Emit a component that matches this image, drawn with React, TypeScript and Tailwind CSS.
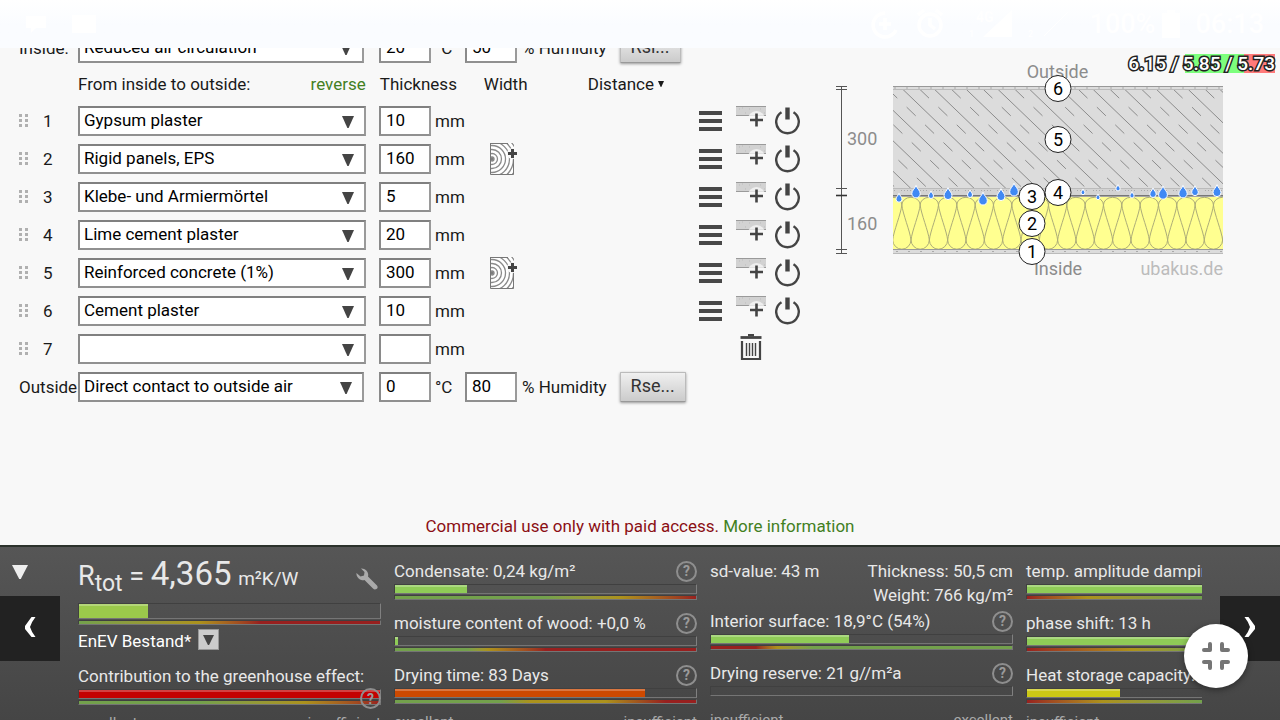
import React from "react";

const materials = [
  "",
  "Gypsum plaster",
  "Rigid panels, EPS",
  "Klebe- und Armiermörtel",
  "Lime cement plaster",
  "Reinforced concrete (1%)",
  "Cement plaster",
];

const layers = [
  { name: "Gypsum plaster", thickness: "10", frame: false },
  { name: "Rigid panels, EPS", thickness: "160", frame: true },
  { name: "Klebe- und Armiermörtel", thickness: "5", frame: false },
  { name: "Lime cement plaster", thickness: "20", frame: false },
  { name: "Reinforced concrete (1%)", thickness: "300", frame: true },
  { name: "Cement plaster", thickness: "10", frame: false },
  { name: "", thickness: "", frame: false },
];

const fieldClass =
  "h-[30px] border-2 border-t-[#808080] border-l-[#8a8a8a] border-r-[#9a9a9a] border-b-[#909090] bg-white text-[17px] leading-5 text-black outline-none";

function Caret({ className }: { className: string }) {
  return (
    <svg viewBox="0 0 12 12" preserveAspectRatio="none" className={className} aria-hidden="true">
      <path d="M0 0H12L6.6 12H5.4z" fill="currentColor" />
    </svg>
  );
}

function Picker({ label, value, options, className }: { label: string; value: string; options: string[]; className: string }) {
  return (
    <div className={`relative ${className}`}>
      <select aria-label={label} defaultValue={value} className={`${fieldClass} block w-full appearance-none pb-0.5 pl-1`}>
        {options.map((o) => (
          <option key={o}>{o}</option>
        ))}
      </select>
      <Caret className="pointer-events-none absolute top-2.5 right-3 h-3 w-3 text-[#444]" />
    </div>
  );
}

function NumberField({ label, value }: { label: string; value: string }) {
  return <input aria-label={label} defaultValue={value} className={`${fieldClass} w-[52px] pb-0.5 pl-[5px]`} />;
}

function DragIcon() {
  return (
    <svg viewBox="0 0 9 14" className="h-3.5 w-[9px]" fill="#b0b0b0" aria-hidden="true">
      {[0, 5, 10].map((y) => (
        <g key={y}>
          <rect x="0" y={y} width="3" height="3" />
          <rect x="6" y={y} width="3" height="3" />
        </g>
      ))}
    </svg>
  );
}

function WoodIcon() {
  return (
    <svg viewBox="0 0 28 32" className="h-8 w-7" aria-hidden="true">
      <defs>
        <clipPath id="wood">
          <rect x="0" y="0" width="24" height="32" />
        </clipPath>
      </defs>
      <g clipPath="url(#wood)" fill="none" stroke="#8a8a8a" strokeWidth="1.3">
        <rect x="0" y="0" width="24" height="32" fill="#fff" stroke="none" />
        {[2, 5.5, 9.5, 13.5, 17.5, 21.5, 25.5].map((r) => (
          <circle key={r} cx="2" cy="16" r={r} />
        ))}
        <circle cx="2" cy="16" r="1.6" fill="#777" />
      </g>
      <path d="M0.5 0V31.5H23.5V15M0 0.5H18" fill="none" stroke="#777" />
      <circle cx="22.5" cy="10.5" r="5.5" fill="#f8f8f8" />
      <path d="M18 10.5H27M22.5 6V15" stroke="#444" strokeWidth="3" />
    </svg>
  );
}

function MenuIcon() {
  return (
    <svg viewBox="0 0 24 20" className="h-5 w-6" fill="#484848" aria-hidden="true">
      <rect y="0" width="23" height="4" />
      <rect y="8" width="23" height="4" />
      <rect y="16" width="23" height="4" />
    </svg>
  );
}

function AddLayerIcon() {
  return (
    <svg viewBox="0 0 30 22" className="h-[22px] w-[30px]" aria-hidden="true">
      <rect width="30" height="10" fill="#d2d2d2" />
      <path d="M0 0.5H30M0 9.5H30" stroke="#9a9a9a" />
      <path d="M3 3h1M9 7h1M13 3h1M24 3h1M28 7h1M6 2h1" stroke="#bbb" />
      <circle cx="20.5" cy="14" r="9" fill="#f8f8f8" opacity="0.75" />
      <path d="M14 14H27M20.5 7.5V20.5" stroke="#444" strokeWidth="2.6" />
    </svg>
  );
}

function PowerIcon() {
  return (
    <svg viewBox="0 0 26 28" className="h-7 w-[26px]" fill="none" stroke="#444" aria-hidden="true">
      <path d="M6.5 5.3A11.3 11.3 0 1 0 18.5 5.3" strokeWidth="2.4" />
      <path d="M12.5 0.5V12.5" strokeWidth="4.4" />
    </svg>
  );
}

function TrashIcon() {
  return (
    <svg viewBox="0 0 22 27" className="h-[27px] w-[22px]" fill="none" stroke="#444" aria-hidden="true">
      <path d="M0.5 3.5H21.5" strokeWidth="2.8" />
      <path d="M8 1.2H14" strokeWidth="2.4" />
      <path d="M2 7V25H20V7" strokeWidth="2.2" />
      <path d="M6.5 9V22M9.5 9V22M12.5 9V22M15.5 9V22" strokeWidth="1.4" />
    </svg>
  );
}

function ResistanceButton({ children }: { children: string }) {
  return (
    <button className="ml-[13px] h-[30px] rounded-[1px] border border-[#bbb] border-b-[#999] bg-linear-to-b from-[#f0f0f0] to-[#cbcbcb] px-2.5 pb-0.5 text-lg leading-5 text-[#333] shadow-[0_1px_3px_rgba(0,0,0,0.4)]">
      {children}
    </button>
  );
}

function AirRow({ label, air, temp, humidity, button }: { label: string; air: string; temp: string; humidity: string; button: string }) {
  return (
    <div className="flex h-[30px] items-center">
      <span className="w-[59px] whitespace-nowrap">{label}</span>
      <Picker label={`${label} air layer`} value={air} options={[air]} className="mr-[15px] w-[286px]" />
      <NumberField label={`${label} temperature`} value={temp} />
      <span className="ml-1 w-[30px]">°C</span>
      <NumberField label={`${label} humidity`} value={humidity} />
      <span className="ml-[5px]">% Humidity</span>
      <ResistanceButton>{button}</ResistanceButton>
    </div>
  );
}

function LayerRow({ index, name, thickness, frame }: { index: number; name: string; thickness: string; frame: boolean }) {
  return (
    <div className="grid h-[30px] grid-cols-[24px_35px_301px_56px_55px_209px_37px_39px_26px] grid-rows-[30px] items-center">
      <DragIcon />
      <span>{index}</span>
      <Picker label={`Layer ${index} material`} value={name} options={materials} className="w-[288px]" />
      <NumberField label={`Layer ${index} thickness`} value={thickness} />
      <span>mm</span>
      <div>
        {frame && (
          <button aria-label="Add frame" className="block">
            <WoodIcon />
          </button>
        )}
      </div>
      {name ? (
        <>
          <button aria-label="Layer menu" className="justify-self-start">
            <MenuIcon />
          </button>
          <button aria-label="Insert layer" className="self-start justify-self-start">
            <AddLayerIcon />
          </button>
          <button aria-label="Toggle layer" className="justify-self-start">
            <PowerIcon />
          </button>
        </>
      ) : (
        <button aria-label="Delete layer" className="col-start-8 ml-1 self-start justify-self-start">
          <TrashIcon />
        </button>
      )}
    </div>
  );
}

const drops = [
  [899, 198, 3], [916, 192, 4.2], [931, 195, 2.5], [948, 194, 4], [970, 194, 2.5], [983, 199, 4.3], [1001, 195, 4],
  [1014, 190, 4.3], [1083, 192, 1.9], [1098, 197, 1.9], [1118, 188, 2.1], [1132, 195, 2.1], [1153, 193, 3.2],
  [1163, 193, 4.4], [1183, 192, 4.2], [1195, 191, 3.3], [1217, 191, 4],
];

const markers = [
  [6, 1058, 88], [5, 1058, 139], [4, 1058, 192], [3, 1032, 196], [2, 1032, 223], [1, 1032, 251],
];

function WallSection() {
  const hatch = [];
  for (let k = -4; k < 11; k++) {
    const x = 903 + k * 31.7;
    hatch.push(<path key={`s${k}`} d={`M${x} 89.5L${x + 103} 188.5`} />);
    hatch.push(<path key={`d${k}`} d={`M${x + 17} 89.5L${x + 120} 188.5`} strokeDasharray="12.5 13" />);
  }
  const waves = [];
  for (let k = -1; k < 19; k++) {
    const x = 911 + k * 18.33;
    waves.push(
      <path
        key={k}
        d={`M${x} 240C${x - 1} 231 ${x - 8.2} 214 ${x - 9.17} 205A9.17 7.7 0 0 1 ${x + 9.17} 205C${x + 8.2} 214 ${x + 1} 231 ${x} 240A9.17 9.5 0 0 0 ${x + 18.33} 240`}
      />
    );
  }
  const grains = [];
  for (let k = 0; k < 82; k++) {
    const x = 894 + k * 4;
    grains.push(<rect key={`a${k}`} x={x + ((k * 7) % 4)} y={190 + ((k * 5) % 5)} width="1" height="1" />);
    if (k % 3 === 0) {
      grains.push(<rect key={`b${k}`} x={x} y={87.5} width="2" height="1" />);
      grains.push(<rect key={`c${k}`} x={x + 2} y={251} width="2" height="1" />);
    }
  }
  return (
    <svg viewBox="830 60 400 224" className="h-[224px] w-[400px]" fontFamily="Roboto, sans-serif" fontSize="18" role="img" aria-label="Wall cross section">
      <defs>
        <clipPath id="wall">
          <rect x="893" y="86" width="330" height="168" />
        </clipPath>
        <clipPath id="concrete">
          <rect x="893" y="89" width="330" height="99.5" />
        </clipPath>
      </defs>
      <g stroke="#555" strokeWidth="1" fill="none">
        <path d="M841.5 86V254M836 86.5H847M836 89.5H847M836 188.5H847M836 249.5H847M836 253.5H847" />
        <path d="M836 195.5H847" stroke="#333" strokeWidth="1.6" />
      </g>
      <text x="847" y="145" fill="#8c8c8c">300</text>
      <text x="847" y="229.5" fill="#8c8c8c">160</text>
      <text x="1057.5" y="77.5" textAnchor="middle" fill="#8c8c8c">Outside</text>
      <g clipPath="url(#wall)">
        <rect x="893" y="86" width="330" height="168" fill="#dcdcdc" />
        <rect x="893" y="188.5" width="330" height="8" fill="#d3d3d3" />
        <rect x="893" y="197" width="330" height="52.5" fill="#ffff90" />
        <g clipPath="url(#concrete)" stroke="#8c8c8c" strokeWidth="1" fill="none">{hatch}</g>
        <g fill="#aaa">{grains}</g>
        <g stroke="#adad78" strokeWidth="1" fill="none">{waves}</g>
        <path d="M893 89.5H1223M893 188.5H1223M893 253.5H1223" stroke="#bbb" />
        <path d="M893 86.5H1223M893 249.5H1223" stroke="#999" />
        <path d="M893 195.8H1223" stroke="#777" strokeWidth="1.5" />
      </g>
      <g stroke="#fff" strokeWidth="1" fill="#4089f4">
        {drops.map(([x, y, r]) => (
          <path
            key={x}
            d={`M${x} ${y - r * 1.6}C${x + r * 0.3} ${y - r * 0.7} ${x + r} ${y - r * 0.4} ${x + r} ${y + r * 0.4}A${r} ${r} 0 0 1 ${x - r} ${y + r * 0.4}C${x - r} ${y - r * 0.4} ${x - r * 0.3} ${y - r * 0.7} ${x} ${y - r * 1.6}z`}
          />
        ))}
      </g>
      <text x="1058" y="275" textAnchor="middle" fill="#8c8c8c">Inside</text>
      <text x="1223" y="275" textAnchor="end" fill="#bcbcbc">ubakus.de</text>
      {markers.map(([n, x, y]) => (
        <g key={n}>
          <circle cx={x} cy={y + 0.5} r="13" fill="#fff" stroke="#222" />
          <text x={x} y={y + 7} textAnchor="middle" fill="#000">{n}</text>
        </g>
      ))}
    </svg>
  );
}

function HelpIcon() {
  return (
    <button aria-label="Help" className="flex h-[21px] w-[21px] shrink-0 items-center justify-center rounded-full border-2 border-[#8e8e8e] text-sm leading-4 font-bold text-[#9a9a9a]">
      ?
    </button>
  );
}

function Bar({ value, fill, scale, tall = false }: { value: number; fill: string; scale?: string; tall?: boolean }) {
  return (
    <div>
      <div className={`${tall ? "h-4" : "h-[10px]"} border border-t-[#404040] border-r-[#808080] border-b-[#757575] border-l-[#404040]`}>
        <div className={`h-full border-t-2 border-white/25 bg-clip-border ${fill}`} style={{ width: `${value}%` }} />
      </div>
      {scale && <div className={`mt-px h-[5px] border border-t-[#404040] border-r-[#757575] border-b-[#757575] border-l-[#404040] ${scale}`} />}
    </div>
  );
}

const lime = "bg-[#8fcb57]";

function Metric({ label, help = false, children }: { label: string; help?: boolean; children: React.ReactNode }) {
  return (
    <div className="h-[52px]">
      <div className="flex h-[26px] items-center justify-between whitespace-nowrap">
        <span>{label}</span>
        {help && <HelpIcon />}
      </div>
      {children}
    </div>
  );
}

function Ends({ left, right }: { left: string; right: string }) {
  return (
    <div className="flex justify-between text-[15px] leading-4 text-[#aaa]">
      <span>{left}</span>
      <span>{right}</span>
    </div>
  );
}

function StatusBar() {
  return (
    <header className="z-10 flex h-12 shrink-0 items-center bg-linear-to-b from-white to-[#fafcff] to-50% pr-4 pl-6 text-[27px] leading-8 font-medium text-white">
      <svg viewBox="0 0 74 24" className="h-6 w-[74px]" fill="#fff" aria-hidden="true">
        <path d="M2 4h20v12H12l-5 5v-5H2zM48 3h24v18H48z" />
      </svg>
      <svg viewBox="0 0 200 32" className="ml-auto h-8 w-[200px]" fill="none" stroke="#fff" strokeWidth="3.5" aria-hidden="true">
        <path d="M15 5A12 12 0 1 0 26 22M9 16H21M15 10V22" />
        <circle cx="60" cy="17" r="11" />
        <path d="M60 10V17L65 21M48 7L54 2M66 2L72 7" />
        <path d="M113 29L142 2V29z" fill="#fff" stroke="none" />
        <path d="M174 28L198 4" strokeWidth="1" />
        <text x="106" y="14" fill="#fff" stroke="none" fontSize="14" fontWeight="700" fontFamily="Roboto, sans-serif">4G</text>
        <text x="99" y="29" fill="#fff" stroke="none" fontSize="9" fontFamily="Roboto, sans-serif">1</text>
        <text x="158" y="29" fill="#fff" stroke="none" fontSize="9" fontFamily="Roboto, sans-serif">2</text>
      </svg>
      <span className="ml-5">100%</span>
      <svg viewBox="0 0 20 28" className="mx-1.5 h-7 w-5" fill="#fff" aria-hidden="true">
        <path d="M6 0h8v3h5v25H1V3h5z" />
      </svg>
      <span className="ml-2">06:13</span>
    </header>
  );
}

export default function App() {
  return (
    <div className="relative flex h-screen flex-col overflow-hidden bg-[#f8f8f8] font-['Roboto',sans-serif] text-[17px] leading-5 text-[#1a1a1a]">
      <StatusBar />

      <main className="flex min-h-0 flex-1 flex-col">
        <div className="flex">
          <section className="-mt-[15px] w-[811px] shrink-0 pl-[19px]">
            <AirRow label="Inside:" air="Reduced air circulation" temp="20" humidity="50" button="Rsi..." />
            <div className="flex h-[43px] items-center pb-0.5 pl-[59px]">
              <span>From inside to outside:</span>
              <a href="#reverse" className="ml-auto text-[#43801f]">reverse</a>
              <span className="ml-3.5 w-[104px]">Thickness</span>
              <span className="w-[104px]">Width</span>
              <button className="mr-[147px] flex items-center gap-1">
                Distance <Caret className="h-1.5 w-1.5" />
              </button>
            </div>
            <div className="flex flex-col gap-2">
              {layers.map((layer, i) => (
                <LayerRow key={i} index={i + 1} {...layer} />
              ))}
              <AirRow label="Outside:" air="Direct contact to outside air" temp="0" humidity="80" button="Rse..." />
            </div>
          </section>
          <section className="min-w-0 flex-1 pt-3 pl-[19px]">
            <WallSection />
          </section>
        </div>
        <p className="mt-auto pb-[9px] text-center text-[#8b0f14]">
          Commercial use only with paid access. <a href="#more" className="text-[#43801f]">More information</a>
        </p>
      </main>

      <div className="absolute top-[54px] right-[5px] bg-[linear-gradient(to_right,transparent_39%,#7dff7d_39%,#7dff7d_79%,#ff7a7a_79%)] text-[19px] leading-[19px] font-medium">
        <span className="text-white [-webkit-text-stroke:3px_#222] [paint-order:stroke_fill]">6.15 / 5.85 / 5.73</span>
      </div>

      <footer className="flex h-[175px] shrink-0 overflow-hidden border-t-2 border-[#2c322c] bg-linear-to-b from-[#565656] to-[#454545] text-[#e8e8e8]">
        <div className="w-[60px] shrink-0">
          <button aria-label="Collapse" className="mt-[18px] ml-3 flex h-[31px] items-start">
            <Caret className="h-[14px] w-4 text-[#eee]" />
          </button>
          <button aria-label="Previous" className="flex h-[65px] w-[60px] items-center justify-center bg-[#222] pb-1 text-white">
            <svg viewBox="0 0 12 20" className="h-5 w-3" fill="currentColor" aria-hidden="true">
              <path d="M7.5 0H11.5Q7.5 5 6 10Q7.5 15 11.5 20H7.5L1 12V9z" />
            </svg>
          </button>
        </div>

        <div className="ml-[18px] flex min-w-0 flex-1 gap-[13px] overflow-hidden pt-[11px]">
          <div className="w-[303px] shrink-0">
            <div className="flex h-[45px] items-start justify-between">
              <h2 className="text-[27px] leading-8 whitespace-nowrap">
                R<sub className="text-[23px] leading-none">tot</sub> = <span className="text-[33px]">4,365</span>{" "}
                <span className="text-[19px]">m²K/W</span>
              </h2>
              <button aria-label="Settings" className="mt-2.5 mr-[3px]">
                <svg viewBox="0 0 22 22" className="h-[22px] w-[22px]" fill="#aaa" aria-hidden="true">
                  <path d="M5 0.5A6.5 6.5 0 0 1 12 8.5L21 17.5Q22.5 20 20.5 21Q18.5 22 17 20.5L8.5 12A6.5 6.5 0 0 1 0.5 5L4.5 8.5L8 7.5L8.5 4z" />
                </svg>
              </button>
            </div>
            <Bar tall value={23} fill="bg-[#9bc94b]" scale="bg-linear-to-r from-[#73a14c] via-[#ac921c] via-40% to-[#98201f] to-60%" />
            <div className="flex h-[38px] items-start pt-1">
              <label htmlFor="standard" className="pt-0.5 pr-[7px] text-white">EnEV Bestand*</label>
              <div className="relative">
                <select id="standard" className="block h-[21px] w-[21px] appearance-none border border-[#999] bg-[#ccc] text-transparent">
                  <option>EnEV Bestand*</option>
                </select>
                <Caret className="pointer-events-none absolute top-1.5 left-[5px] h-2.5 w-[11px] text-[#444]" />
              </div>
            </div>
            <div className="relative">
              <Metric label="Contribution to the greenhouse effect:">
                <Bar value={100} fill="bg-[#c40000]" scale="bg-linear-to-r from-[#73a14c] from-40% via-[#ac921c] via-75% to-[#98201f]" />
              </Metric>
              <div className="absolute right-0 bottom-1.5">
                <HelpIcon />
              </div>
            </div>
            <Ends left="excellent" right="insufficient" />
          </div>

          <div className="w-[303px] shrink-0">
            <Metric label="Condensate: 0,24 kg/m²" help>
              <Bar value={24} fill={lime} scale="bg-linear-to-r from-[#73a14c] from-50% via-[#ac921c] via-75% to-[#98201f]" />
            </Metric>
            <Metric label="moisture content of wood: +0,0 %" help>
              <Bar value={1} fill={lime} scale="bg-linear-to-r from-[#73a14c] from-24% via-[#ac921c] via-31% to-[#98201f] to-50%" />
            </Metric>
            <Metric label="Drying time: 83 Days" help>
              <Bar value={83} fill="bg-[#cd4900]" scale="bg-[linear-gradient(to_right,#73a14c_35%,#ac921c_45%,#ac921c_70%,#98201f_90%)]" />
            </Metric>
            <Ends left="excellent" right="insufficient" />
          </div>

          <div className="w-[303px] shrink-0">
            <div className="flex h-[50px] justify-between pt-px leading-6">
              <span>sd-value: 43 m</span>
              <span className="text-right">
                Thickness: 50,5 cm
                <br />
                Weight: 766 kg/m²
              </span>
            </div>
            <Metric label="Interior surface: 18,9°C (54%)" help>
              <Bar value={46} fill={lime} scale="bg-linear-to-r from-[#98201f] from-15% via-[#ac921c] via-22% to-[#73a14c] to-34%" />
            </Metric>
            <Metric label="Drying reserve: 21 g//m²a" help>
              <Bar value={0} fill={lime} />
            </Metric>
            <Ends left="insufficient" right="excellent" />
          </div>

          <div className="w-[303px] shrink-0">
            <Metric label="temp. amplitude damping: >100">
              <Bar value={100} fill={lime} scale="bg-linear-to-r from-[#98201f] via-[#ac921c] via-20% to-[#73a14c] to-55%" />
            </Metric>
            <Metric label="phase shift: 13 h">
              <Bar value={72} fill={lime} scale="bg-linear-to-r from-[#98201f] via-[#ac921c] via-35% to-[#73a14c] to-58%" />
            </Metric>
            <Metric label="Heat storage capacity:">
              <Bar value={31} fill="bg-[#cbc816]" scale="bg-linear-to-r from-[#98201f] via-[#ac921c] via-25% to-[#73a14c] to-58%" />
            </Metric>
            <Ends left="insufficient" right="excellent" />
          </div>
        </div>

        <div className="ml-[18px] w-[60px] shrink-0 pt-[49px]">
          <button aria-label="Next" className="flex h-[65px] w-[60px] items-center justify-center bg-[#222] pb-1 text-white">
            <svg viewBox="0 0 12 20" className="h-5 w-3" fill="currentColor" aria-hidden="true">
              <path d="M4.5 0H0.5Q4.5 5 6 10Q4.5 15 0.5 20H4.5L11 12V9z" />
            </svg>
          </button>
        </div>
      </footer>

      <button aria-label="Exit full screen" className="absolute right-8 bottom-8 flex h-16 w-16 items-center justify-center rounded-full bg-white shadow-[0_2px_6px_rgba(0,0,0,0.4)]">
        <svg viewBox="0 0 28 28" className="h-7 w-7" fill="none" stroke="#757575" strokeWidth="4" strokeLinecap="round" strokeLinejoin="round" aria-hidden="true">
          <path d="M2 8H8V2M20 2V8H26M2 20H8V26M26 20H20V26" />
        </svg>
      </button>
    </div>
  );
}
